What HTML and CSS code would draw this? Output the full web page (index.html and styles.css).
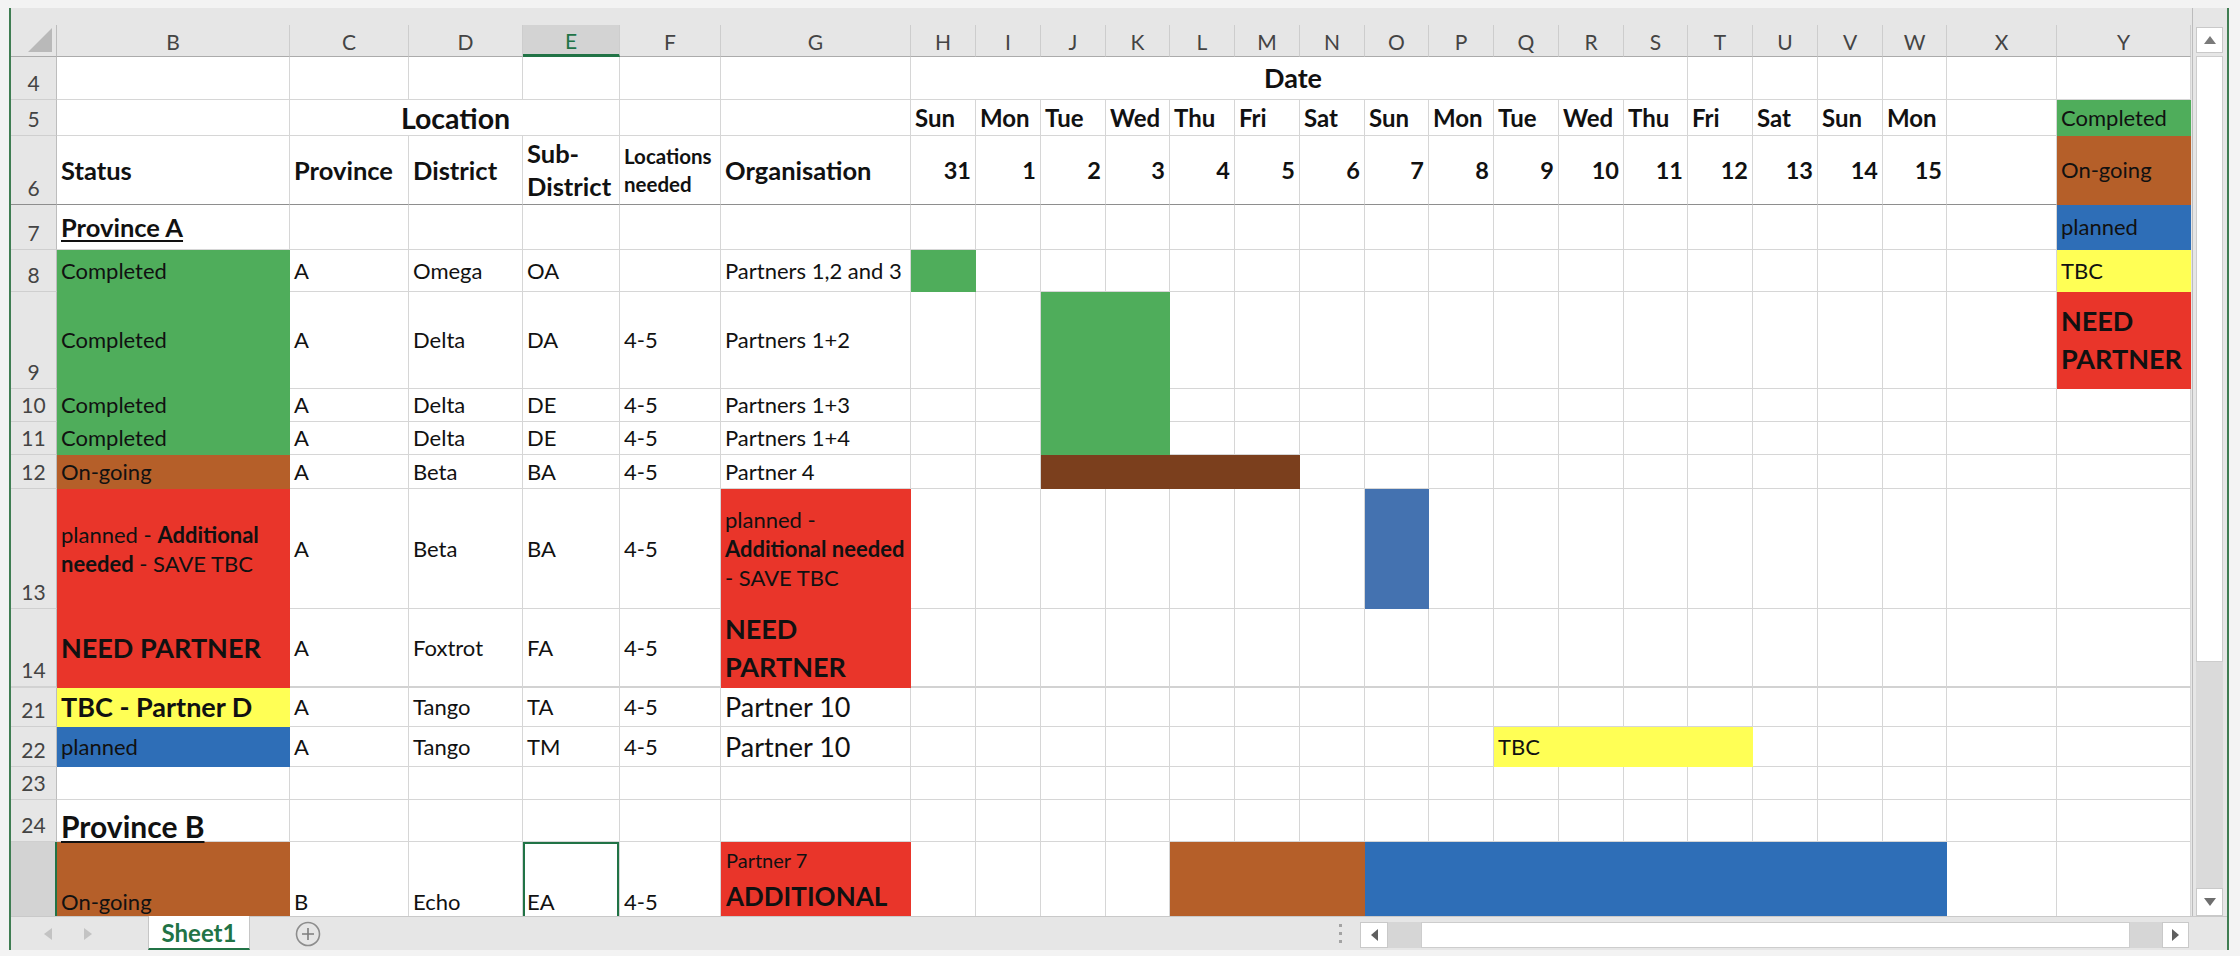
FILE: index.html
```html
<!DOCTYPE html>
<html lang="en">
<head>
<meta charset="utf-8">
<title>Sheet1</title>
<link rel="stylesheet" href="styles.css">
</head>
<body>
<div class="app">
  <div class="frame">
    <div class="main">
      <div class="sheet">
        <table class="grid">
          <colgroup>
            <col class="c-rh"><col class="c-b"><col class="c-c"><col class="c-d"><col class="c-e"><col class="c-f"><col class="c-g">
            <col class="c-65"><col class="c-65"><col class="c-65"><col class="c-64">
            <col class="c-65"><col class="c-65"><col class="c-65"><col class="c-64">
            <col class="c-65"><col class="c-65"><col class="c-65"><col class="c-64">
            <col class="c-65"><col class="c-65"><col class="c-65"><col class="c-64">
            <col class="c-x"><col class="c-y">
          </colgroup>
          <tr class="r-top"><td colspan="25" class="topband"></td></tr>
          <tr class="r-hdr">
            <th class="corner"><svg class="corner-tri" width="24" height="24" viewBox="0 0 24 24"><polygon points="24,0 24,24 0,24" fill="#b9b9b9"/></svg></th>
            <th class="ch">B</th><th class="ch">C</th><th class="ch">D</th><th class="ch ch-sel">E</th><th class="ch">F</th><th class="ch">G</th>
            <th class="ch">H</th><th class="ch">I</th><th class="ch">J</th><th class="ch">K</th><th class="ch">L</th><th class="ch">M</th><th class="ch">N</th><th class="ch">O</th>
            <th class="ch">P</th><th class="ch">Q</th><th class="ch">R</th><th class="ch">S</th><th class="ch">T</th><th class="ch">U</th><th class="ch">V</th><th class="ch">W</th>
            <th class="ch">X</th><th class="ch">Y</th>
          </tr>
          <tr class="r4">
            <th class="rh">4</th>
            <td></td><td></td><td></td><td></td><td></td><td></td>
            <td colspan="12" class="t-date">Date</td>
            <td></td><td></td><td></td><td></td><td></td><td></td>
          </tr>
          <tr class="r5">
            <th class="rh">5</th>
            <td></td>
            <td colspan="3" class="t-loc">Location</td>
            <td></td><td></td>
            <td class="t-day">Sun</td><td class="t-day">Mon</td><td class="t-day">Tue</td><td class="t-day">Wed</td><td class="t-day">Thu</td><td class="t-day">Fri</td><td class="t-day">Sat</td><td class="t-day">Sun</td>
            <td class="t-day">Mon</td><td class="t-day">Tue</td><td class="t-day">Wed</td><td class="t-day">Thu</td><td class="t-day">Fri</td><td class="t-day">Sat</td><td class="t-day">Sun</td><td class="t-day">Mon</td>
            <td></td>
            <td class="f-green lg">Completed</td>
          </tr>
          <tr class="r6 freeze">
            <th class="rh">6</th>
            <td class="t-hd">Status</td>
            <td class="t-hd">Province</td>
            <td class="t-hd">District</td>
            <td class="t-hd t-wrap">Sub-<br>District</td>
            <td class="t-sm">Locations<br>needed</td>
            <td class="t-hd">Organisation</td>
            <td class="t-num">31</td><td class="t-num">1</td><td class="t-num">2</td><td class="t-num">3</td><td class="t-num">4</td><td class="t-num">5</td><td class="t-num">6</td><td class="t-num">7</td>
            <td class="t-num">8</td><td class="t-num">9</td><td class="t-num">10</td><td class="t-num">11</td><td class="t-num">12</td><td class="t-num">13</td><td class="t-num">14</td><td class="t-num">15</td>
            <td></td>
            <td class="f-brown lg">On-going</td>
          </tr>
          <tr class="r7">
            <th class="rh">7</th>
            <td class="t-prov">Province A</td>
            <td></td><td></td><td></td><td></td><td></td>
            <td></td><td></td><td></td><td></td><td></td><td></td><td></td><td></td>
            <td></td><td></td><td></td><td></td><td></td><td></td><td></td><td></td>
            <td></td>
            <td class="f-blue lg">planned</td>
          </tr>
          <tr class="r8">
            <th class="rh">8</th>
            <td class="f-green">Completed</td>
            <td>A</td><td>Omega</td><td>OA</td><td></td><td>Partners 1,2 and 3</td>
            <td class="f-green"></td><td></td><td></td><td></td><td></td><td></td><td></td><td></td>
            <td></td><td></td><td></td><td></td><td></td><td></td><td></td><td></td>
            <td></td>
            <td class="f-yellow lg">TBC</td>
          </tr>
          <tr class="r9">
            <th class="rh">9</th>
            <td class="f-green">Completed</td>
            <td>A</td><td>Delta</td><td>DA</td><td>4-5</td><td>Partners 1+2</td>
            <td></td><td></td><td class="f-green"></td><td class="f-green"></td><td></td><td></td><td></td><td></td>
            <td></td><td></td><td></td><td></td><td></td><td></td><td></td><td></td>
            <td></td>
            <td class="f-red t-legneed">NEED PARTNER</td>
          </tr>
          <tr class="r10">
            <th class="rh">10</th>
            <td class="f-green">Completed</td>
            <td>A</td><td>Delta</td><td>DE</td><td>4-5</td><td>Partners 1+3</td>
            <td></td><td></td><td class="f-green"></td><td class="f-green"></td><td></td><td></td><td></td><td></td>
            <td></td><td></td><td></td><td></td><td></td><td></td><td></td><td></td>
            <td></td><td></td>
          </tr>
          <tr class="r11">
            <th class="rh">11</th>
            <td class="f-green">Completed</td>
            <td>A</td><td>Delta</td><td>DE</td><td>4-5</td><td>Partners 1+4</td>
            <td></td><td></td><td class="f-green"></td><td class="f-green"></td><td></td><td></td><td></td><td></td>
            <td></td><td></td><td></td><td></td><td></td><td></td><td></td><td></td>
            <td></td><td></td>
          </tr>
          <tr class="r12">
            <th class="rh">12</th>
            <td class="f-brown">On-going</td>
            <td>A</td><td>Beta</td><td>BA</td><td>4-5</td><td>Partner 4</td>
            <td></td><td></td><td colspan="4" class="f-dbrown"></td><td></td><td></td>
            <td></td><td></td><td></td><td></td><td></td><td></td><td></td><td></td>
            <td></td><td></td>
          </tr>
          <tr class="r13">
            <th class="rh">13</th>
            <td class="f-red t-note">planned - <b>Additional</b><br><b>needed</b> - SAVE TBC</td>
            <td>A</td><td>Beta</td><td>BA</td><td>4-5</td>
            <td class="f-red t-note">planned -<br><b>Additional needed</b><br>- SAVE TBC</td>
            <td></td><td></td><td></td><td></td><td></td><td></td><td></td><td class="f-blue2"></td>
            <td></td><td></td><td></td><td></td><td></td><td></td><td></td><td></td>
            <td></td><td></td>
          </tr>
          <tr class="r14">
            <th class="rh">14</th>
            <td class="f-red t-need">NEED PARTNER</td>
            <td>A</td><td>Foxtrot</td><td>FA</td><td>4-5</td>
            <td class="f-red t-need t-need2">NEED<br>PARTNER</td>
            <td></td><td></td><td></td><td></td><td></td><td></td><td></td><td></td>
            <td></td><td></td><td></td><td></td><td></td><td></td><td></td><td></td>
            <td></td><td></td>
          </tr>
          <tr class="r21">
            <th class="rh">21</th>
            <td class="f-yellow t-need">TBC - Partner D</td>
            <td>A</td><td>Tango</td><td>TA</td><td>4-5</td>
            <td class="t-big">Partner 10</td>
            <td></td><td></td><td></td><td></td><td></td><td></td><td></td><td></td>
            <td></td><td></td><td></td><td></td><td></td><td></td><td></td><td></td>
            <td></td><td></td>
          </tr>
          <tr class="r22">
            <th class="rh">22</th>
            <td class="f-blue">planned</td>
            <td>A</td><td>Tango</td><td>TM</td><td>4-5</td>
            <td class="t-big">Partner 10</td>
            <td></td><td></td><td></td><td></td><td></td><td></td><td></td><td></td>
            <td></td><td colspan="4" class="f-yellow t-bar">TBC</td><td></td><td></td><td></td>
            <td></td><td></td>
          </tr>
          <tr class="r23">
            <th class="rh">23</th>
            <td></td><td></td><td></td><td></td><td></td><td></td>
            <td></td><td></td><td></td><td></td><td></td><td></td><td></td><td></td>
            <td></td><td></td><td></td><td></td><td></td><td></td><td></td><td></td>
            <td></td><td></td>
          </tr>
          <tr class="r24">
            <th class="rh">24</th>
            <td class="t-provb">Province B</td>
            <td></td><td></td><td></td><td></td><td></td>
            <td></td><td></td><td></td><td></td><td></td><td></td><td></td><td></td>
            <td></td><td></td><td></td><td></td><td></td><td></td><td></td><td></td>
            <td></td><td></td>
          </tr>
          <tr class="r25">
            <th class="rh rh-sel"></th>
            <td class="f-brown">On-going</td>
            <td>B</td><td>Echo</td><td class="active">EA</td><td>4-5</td>
            <td class="f-red t-g25"><span class="t-p7">Partner 7</span><br><b class="t-add">ADDITIONAL</b></td>
            <td></td><td></td><td></td><td></td>
            <td colspan="3" class="f-brown"></td>
            <td colspan="9" class="f-blue"></td>
            <td></td><td></td>
          </tr>
        </table>
      </div>
      <div class="vscroll">
        <div class="sbtn"><svg width="12" height="8" viewBox="0 0 12 8"><polygon points="6,0 12,8 0,8" fill="#7a7a7a"/></svg></div>
        <div class="vthumb"></div>
        <div class="vtrack"></div>
        <div class="sbtn sbtn-down"><svg width="12" height="8" viewBox="0 0 12 8"><polygon points="0,0 12,0 6,8" fill="#6e6e6e"/></svg></div>
      </div>
    </div>
    <div class="tabbar">
      <div class="tabnav">
        <svg width="8" height="12" viewBox="0 0 8 12"><polygon points="8,0 8,12 0,6" fill="#c3c3c3"/></svg>
        <svg width="8" height="12" viewBox="0 0 8 12"><polygon points="0,0 8,6 0,12" fill="#c3c3c3"/></svg>
      </div>
      <div class="tab">Sheet1</div>
      <div class="addsheet"><svg width="26" height="26" viewBox="0 0 26 26"><circle cx="13" cy="13" r="11.5" fill="none" stroke="#8d8d8d" stroke-width="1.6"/><path d="M13 7v12M7 13h12" stroke="#7d7d7d" stroke-width="1.6"/></svg></div>
      <div class="tabspace"></div>
      <div class="split"><span></span><span></span><span></span></div>
      <div class="hscroll">
        <div class="hbtn"><svg width="7" height="12" viewBox="0 0 7 12"><polygon points="7,0 7,12 0,6" fill="#5f5f5f"/></svg></div>
        <div class="htrack htrack-l"></div>
        <div class="hthumb"></div>
        <div class="htrack htrack-r"></div>
        <div class="hbtn hbtn-r"><svg width="7" height="12" viewBox="0 0 7 12"><polygon points="0,0 7,6 0,12" fill="#5f5f5f"/></svg></div>
      </div>
    </div>
  </div>
</div>
</body>
</html>
```

FILE: styles.css
```css
* { box-sizing: border-box; }
html, body { margin: 0; padding: 0; }
body {
  background: #f3f3f3;
  font-family: "Lato", "Liberation Sans", sans-serif;
  color: #000;
}
.app {
  width: 2240px;
  height: 956px;
  padding: 8px 11px 6px 9px;
  display: flex;
  flex-direction: column;
  background: #f3f3f3;
}
.frame {
  flex: 1;
  min-height: 0;
  display: flex;
  flex-direction: column;
  border-left: 2px solid #3f7d52;
  border-right: 2px solid #3f7d52;
  background: #e6e6e6;
}
.main { display: flex; height: 908px; }
.sheet {
  width: 2181px;
  height: 908px;
  overflow: hidden;
  background: #e6e6e6;
}

/* ---------- grid ---------- */
.grid {
  table-layout: fixed;
  width: 2180px;
  border-collapse: separate;
  border-spacing: 0;
  background: #fff;
}
.c-rh { width: 46px; }
.c-b { width: 233px; }
.c-c { width: 119px; }
.c-d { width: 114px; }
.c-e { width: 97px; }
.c-f { width: 101px; }
.c-g { width: 190px; }
.c-65 { width: 65px; }
.c-64 { width: 64px; }
.c-x { width: 110px; }
.c-y { width: 134px; }

.grid td {
  border-right: 1px solid #d6d6d6;
  border-bottom: 1px solid #d6d6d6;
  padding: 0 4px;
  font-size: 22px;
  line-height: 28px;
  vertical-align: middle;
  white-space: nowrap;
  color: #111;
}
.grid th { font-weight: normal; }

.r-top { height: 17px; }
.grid td.topband { background: #e6e6e6; border: 0; padding: 0; }
.r-hdr { height: 32px; }
.ch {
  background: #e6e6e6;
  border-right: 1px solid #cdcdcd;
  border-bottom: 1px solid #ababab;
  color: #444;
  font-size: 21px;
  line-height: 26px;
  text-align: center;
  vertical-align: middle;
  padding: 3px 0 0;
}
.ch-sel {
  background: #d3d3d3;
  color: #217346;
  border-bottom: 3px solid #217346;
}
.corner {
  background: #e6e6e6;
  border-right: 1px solid #bdbdbd;
  border-bottom: 1px solid #ababab;
  text-align: right;
  vertical-align: bottom;
  padding: 0 4px 4px 0;
}
.corner-tri { display: inline-block; vertical-align: bottom; }

.rh {
  background: #e6e6e6;
  border-right: 1px solid #bdbdbd;
  border-bottom: 1px solid #cfcfcf;
  color: #444;
  font-size: 21px;
  line-height: 24px;
  text-align: center;
  vertical-align: bottom;
  padding: 0 0 4px;
}
.rh-sel { background: #d3d3d3; border-right: 2px solid #217346; }

.r4 { height: 43px; }
.r5 { height: 36px; }
.r6 { height: 69px; }
.r7 { height: 45px; }
.r8 { height: 42px; }
.r9 { height: 97px; }
.r10 { height: 33px; }
.r11 { height: 33px; }
.r12 { height: 34px; }
.r13 { height: 120px; }
.r14 { height: 79px; }
.r21 { height: 39px; }
.r22 { height: 40px; }
.r23 { height: 33px; }
.r24 { height: 42px; }
.r25 { height: 96px; }

.grid .r14 td, .r14 .rh { border-bottom: 2px solid #d2d2d2; }
.r6.freeze td, .r6.freeze .rh { border-bottom: 1px solid #8e8e8e; }

/* fills */
.grid td.f-green { background: #4fad5b; border-color: #4fad5b; }
.grid td.f-brown { background: #b55f29; border-color: #b55f29; }
.grid td.f-dbrown { background: #7b3f1d; border-color: #7b3f1d; }
.grid td.f-red { background: #e9352a; border-color: #e9352a; }
.grid td.f-yellow { background: #ffff55; border-color: #ffff55; }
.grid td.f-blue { background: #2e6eb7; border-color: #2e6eb7; }
.grid td.f-blue2 { background: #4472b0; border-color: #4472b0; }
.grid .r14 td.f-red { border-bottom-color: #e9352a; }
.grid .r6 td.f-brown { border-bottom-color: #b55f29; }

/* text styles */
.grid td.t-date { font-size: 27px; font-weight: 700; text-align: center; padding-right: 16px; }
.grid td.t-loc { font-size: 28.5px; font-weight: 700; text-align: center; padding-left: 6px; }
.grid td.t-day { font-size: 24px; font-weight: 700; padding-left: 4px; padding-right: 0; }
.grid td.t-hd { font-size: 25.5px; font-weight: 700; line-height: 33px; }
.grid td.t-sm { font-size: 20.5px; font-weight: 700; line-height: 28px; }
.grid td.t-num { font-size: 23.5px; font-weight: 700; text-align: right; padding-right: 4px; }
.grid td.t-prov {
  font-size: 25.5px; font-weight: 700;
  text-decoration: underline; text-decoration-thickness: 2px; text-underline-offset: 3px;
}
.grid td.t-provb {
  font-size: 30px; font-weight: 700;
  text-decoration: underline; text-decoration-thickness: 2px; text-underline-offset: 3px;
  vertical-align: bottom; padding-bottom: 1px;
}
.grid td.t-note { font-size: 22px; line-height: 29px; white-space: nowrap; }
.grid td.t-need { font-size: 27px; font-weight: 700; }
.grid td.t-need2 { line-height: 38px; }
.grid td.t-legneed { font-size: 27px; font-weight: 700; line-height: 38px; white-space: normal; }
.grid td.t-big { font-size: 27px; }
.grid td.t-bar { padding-left: 4px; }
.grid td.lg { font-size: 22px; }

.grid .r25 td { vertical-align: bottom; padding-bottom: 26px; }
.grid .r25 td.t-g25 { vertical-align: top; padding-top: 0; padding-left: 5px; line-height: 36px; }
.t-p7 { font-size: 20px; }
.t-add { font-size: 26px; font-weight: 700; }
.grid td.active { box-shadow: inset 0 0 0 2px #217346; }

/* ---------- vertical scrollbar ---------- */
.vscroll {
  width: 35px;
  border-left: 1px solid #bcbcbc;
  padding: 19px 4px 0 3px;
  display: flex;
  flex-direction: column;
  background: #e6e6e6;
}
.sbtn {
  height: 26px;
  background: #fff;
  border: 1px solid #c9c9c9;
  display: flex;
  align-items: center;
  justify-content: center;
}
.sbtn-down { height: 28px; }
.vthumb {
  margin-top: 3px;
  height: 606px;
  background: #fff;
  border: 1px solid #cdcdcd;
}
.vtrack { flex: 1; background: #dadada; }

/* ---------- tab bar ---------- */
.tabbar {
  height: 34px;
  display: flex;
  align-items: stretch;
  background: #e6e6e6;
  border-top: 1px solid #c9c9c9;
}
.tabnav {
  width: 137px;
  display: flex;
  align-items: center;
  gap: 32px;
  padding-left: 33px;
}
.tab {
  width: 102px;
  margin-top: -1px;
  background: #fff;
  border-left: 1px solid #c6c6c6;
  border-right: 1px solid #c6c6c6;
  border-bottom: 2px solid #217346;
  color: #217346;
  font-size: 24px;
  font-weight: 700;
  display: flex;
  align-items: center;
  justify-content: center;
}
.addsheet {
  margin-left: 45px;
  display: flex;
  align-items: center;
}
.tabspace { flex: 1; }
.split {
  width: 4px;
  display: flex;
  flex-direction: column;
  justify-content: center;
  gap: 5px;
  margin-right: 17px;
}
.split span { display: block; width: 3px; height: 3px; background: #a3a3a3; }
.hscroll {
  width: 829px;
  height: 26px;
  margin-top: 5px;
  margin-right: 38px;
  display: flex;
}
.hbtn {
  width: 28px;
  background: #fff;
  border: 1px solid #c9c9c9;
  display: flex;
  align-items: center;
  justify-content: center;
}
.hbtn-r { width: 27px; }
.htrack { background: #d6d6d6; }
.htrack-l { width: 33px; }
.htrack-r { width: 32px; }
.hthumb { width: 709px; background: #fff; border: 1px solid #cdcdcd; }
```
